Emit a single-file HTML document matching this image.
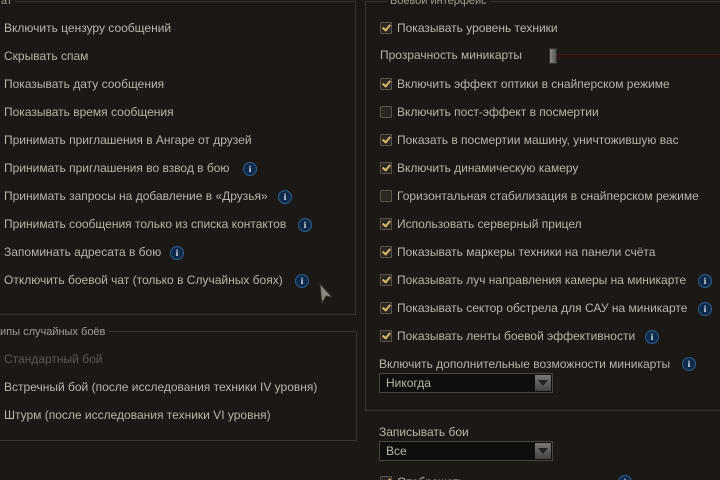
<!DOCTYPE html>
<html style="overflow:hidden;height:480px"><head><meta charset="utf-8"><style>
body{margin:0;width:720px;height:480px;overflow:hidden;background:#1b1815;font-family:"Liberation Sans","DejaVu Sans",sans-serif;font-size:12px;color:#bab5ab;position:relative}
.fs{position:absolute;border:1px solid #3a352c}
.lg{position:absolute;background:#1b1815;font-size:11px;color:#a39e94;padding:0 3px;line-height:12px}
.t{position:absolute;white-space:nowrap;line-height:14px}
.cb{position:absolute;width:10px;height:10px;border:1px solid #5a5448;background:#2a2622;border-radius:1px}
.cb.on::after{content:"";position:absolute;left:3px;top:0px;width:3px;height:6px;border:solid #d8b86a;border-width:0 2px 2px 0;transform:rotate(40deg)}
.i{position:absolute;width:12px;height:12px;border-radius:50%;background:#0d2a4a;border:1px solid #2f5f8f;color:#dfe8f2;font-size:9px;font-weight:bold;text-align:center;line-height:12px;font-family:"Liberation Serif",serif}
.dd{position:absolute;width:172px;height:18px;border:1px solid #4a463e;background:#0f0e0c}
.dd span{position:absolute;left:6px;top:2px}
.dd b{position:absolute;right:1px;top:1px;width:16px;height:16px;background:linear-gradient(#777,#444)}
.dd b::after{content:"";position:absolute;left:3px;top:5px;border:5px solid transparent;border-top:6px solid #222}
</style></head><body>
<div class="fs" style="left:-5px;top:1px;width:359px;height:312px"></div>
<div class="lg" style="left:-2px;top:-5px">ат</div>
<div class="t" style="left:4px;top:21px">Включить цензуру сообщений</div>
<div class="t" style="left:4px;top:49px">Скрывать спам</div>
<div class="t" style="left:4px;top:77px">Показывать дату сообщения</div>
<div class="t" style="left:4px;top:105px">Показывать время сообщения</div>
<div class="t" style="left:4px;top:133px">Принимать приглашения в Ангаре от друзей</div>
<div class="t" style="left:4px;top:161px">Принимать приглашения во взвод в бою</div><div class="i" style="left:243px;top:162px">i</div>
<div class="t" style="left:4px;top:189px">Принимать запросы на добавление в «Друзья»</div><div class="i" style="left:278px;top:190px">i</div>
<div class="t" style="left:4px;top:217px">Принимать сообщения только из списка контактов</div><div class="i" style="left:298px;top:218px">i</div>
<div class="t" style="left:4px;top:245px">Запоминать адресата в бою</div><div class="i" style="left:170px;top:246px">i</div>
<div class="t" style="left:4px;top:273px">Отключить боевой чат (только в Случайных боях)</div><div class="i" style="left:295px;top:274px">i</div>
<svg style="position:absolute;left:318px;top:283px" width="16" height="22"><path d="M2 1 L14 14 L8 13 L4 20 Z" fill="#8c8a80" stroke="#3a3830"/></svg>
<div class="fs" style="left:-5px;top:331px;width:360px;height:108px"></div>
<div class="lg" style="left:-3px;top:326px">ипы случайных боёв</div>
<div class="t" style="left:4px;top:352px;color:#5e5a53">Стандартный бой</div>
<div class="t" style="left:4px;top:380px">Встречный бой (после исследования техники IV уровня)</div>
<div class="t" style="left:4px;top:408px">Штурм (после исследования техники VI уровня)</div>

<div class="fs" style="left:365px;top:1px;width:360px;height:408px"></div>
<div class="lg" style="left:387px;top:-5px">Боевой интерфейс</div>
<div class="cb on" style="left:380px;top:22px"></div><div class="t" style="left:397px;top:21px">Показывать уровень техники</div>
<div class="t" style="left:380px;top:48px">Прозрачность миникарты</div>
<div style="position:absolute;left:552px;top:54px;width:170px;height:3px;background:#2a1512;border-top:1px solid #3a1e18"></div>
<div style="position:absolute;left:549px;top:48px;width:6px;height:14px;background:linear-gradient(90deg,#888,#555);border:1px solid #333"></div>
<div class="cb on" style="left:380px;top:78px"></div><div class="t" style="left:397px;top:77px">Включить эффект оптики в снайперском режиме</div>
<div class="cb" style="left:380px;top:106px"></div><div class="t" style="left:397px;top:105px">Включить пост-эффект в посмертии</div>
<div class="cb on" style="left:380px;top:134px"></div><div class="t" style="left:397px;top:133px">Показать в посмертии машину, уничтожившую вас</div>
<div class="cb on" style="left:380px;top:162px"></div><div class="t" style="left:397px;top:161px">Включить динамическую камеру</div>
<div class="cb" style="left:380px;top:190px"></div><div class="t" style="left:397px;top:189px">Горизонтальная стабилизация в снайперском режиме</div>
<div class="cb on" style="left:380px;top:218px"></div><div class="t" style="left:397px;top:217px">Использовать серверный прицел</div>
<div class="cb on" style="left:380px;top:246px"></div><div class="t" style="left:397px;top:245px">Показывать маркеры техники на панели счёта</div>
<div class="cb on" style="left:380px;top:274px"></div><div class="t" style="left:397px;top:273px">Показывать луч направления камеры на миникарте</div><div class="i" style="left:698px;top:274px">i</div>
<div class="cb on" style="left:380px;top:302px"></div><div class="t" style="left:397px;top:301px">Показывать сектор обстрела для САУ на миникарте</div><div class="i" style="left:698px;top:302px">i</div>
<div class="cb on" style="left:380px;top:330px"></div><div class="t" style="left:397px;top:329px">Показывать ленты боевой эффективности</div><div class="i" style="left:645px;top:330px">i</div>
<div class="t" style="left:379px;top:357px">Включить дополнительные возможности миникарты</div><div class="i" style="left:682px;top:357px">i</div>
<div class="dd" style="left:379px;top:373px"><span>Никогда</span><b></b></div>
<div class="t" style="left:379px;top:425px">Записывать бои</div>
<div class="dd" style="left:379px;top:441px"><span>Все</span><b></b></div>
<div class="cb on" style="left:380px;top:476px"></div><div class="t" style="left:397px;top:475px">Отображать</div><div class="i" style="left:618px;top:475px">i</div>
</body></html>
